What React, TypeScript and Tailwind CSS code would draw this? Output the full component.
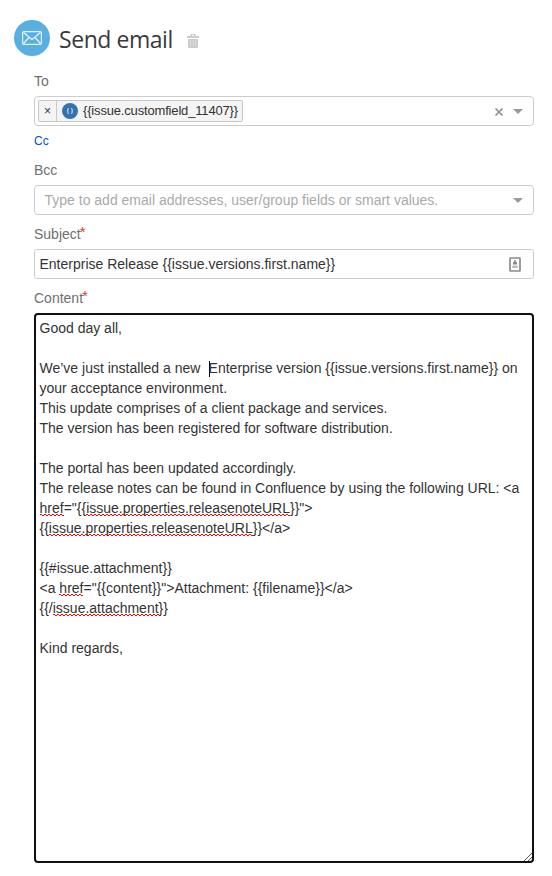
import React from 'react';

const Typo: React.FC<{ children: React.ReactNode }> = ({ children }) => (
  <span className="bg-[conic-gradient(from_90deg_at_2px_1px,#f00_25%,transparent_0_50%,#f00_0_75%,transparent_0)] bg-[length:4px_2px] bg-bottom-left bg-repeat-x">
    {children}
  </span>
);

const Label: React.FC<{ text: string; required?: boolean }> = ({ text, required }) => (
  <div className="flex h-5 text-[#707070]">
    <span>{text}</span>
    {required && <span className="-mt-[2px] -ml-px text-[15px] leading-5 text-[#d04437]">*</span>}
  </div>
);

const Caret: React.FC = () => (
  <span className="h-0 w-0 border-x-[5px] border-t-[5px] border-x-transparent border-t-[#999]" />
);

const Header: React.FC = () => (
  <header className="flex h-9 items-center pl-[14px]">
    <svg className="h-9 w-9" viewBox="0 0 36 36" fill="none">
      <circle cx="18" cy="18" r="18" fill="#59afe1" />
      <g stroke="#e6f3fb" strokeWidth="1.2" strokeLinejoin="round">
        <rect x="8.6" y="11.6" width="18.8" height="12.8" rx="1.2" />
        <path d="M9.5 12.5L18 19.5L26.5 12.5M9.5 23.5L15 17.5M26.5 23.5L21 17.5" />
      </g>
    </svg>
    <h1 className="mt-px ml-[9px] w-[114px] font-['Open_Sans',sans-serif] text-[23px] leading-9 tracking-[-0.45px] whitespace-nowrap text-[#3a3a3a]">Send email</h1>
    <svg className="mt-[5px] ml-[14px] h-[14px] w-3" viewBox="0 0 12 14">
      <path fill="#ccc" d="M3.5 0h5v2H12v2H0V2h3.5zM5 1v1h2V1zM1 5h10V12.5q0 1.5-1.5 1.5h-7Q1 14 1 12.5z" />
      <path stroke="#ddd" strokeWidth="1" d="M3.5 6v6M6 6v6M8.5 6v6" />
    </svg>
  </header>
);

const Recipient: React.FC = () => (
  <div className="flex h-[22px] items-center rounded-[2px] border border-[#c8c8c8] bg-[#f4f4f4] text-[#333]">
    <span className="flex h-full w-[18px] items-center justify-center border-r border-[#c8c8c8] text-xs">×</span>
    <svg className="ml-[5px] h-4 w-4" viewBox="0 0 16 16" fill="none">
      <circle cx="8" cy="8" r="8" fill="#3572b0" />
      <path stroke="#c3d5e7" strokeWidth="1.2" d="M7 5.5q-1.2 0-1.2 1.2v2.6q0 1.2 1.2 1.2M9 5.5q1.2 0 1.2 1.2v2.6q0 1.2-1.2 1.2" />
    </svg>
    <span className="pr-1 pl-[5px] text-[13px] tracking-[-0.17px]">{'{{issue.customfield_11407}}'}</span>
  </div>
);

const Message: React.FC = () => (
  <div className="relative h-[550px] rounded-[4px] border-2 border-[#101014] py-[3px] pl-[3.5px] whitespace-pre text-[#333]">
    <p>Good day all,</p>
    <br />
    <p>
      {'We’ve just installed a new  '}
      <span className="-mr-[1.5px] ml-px inline-block h-4 w-px bg-black align-middle" />
      {'Enterprise version {{issue.versions.first.name}} on'}
    </p>
    <p>your acceptance environment.</p>
    <p>This update comprises of a client package and services.</p>
    <p>The version has been registered for software distribution.</p>
    <br />
    <p>The portal has been updated accordingly.</p>
    <p>{'The release notes can be found in Confluence by using the following URL: <a'}</p>
    <p>
      <Typo>href</Typo>
      {'="{{'}
      <Typo>issue.properties.releasenoteURL</Typo>
      {'}}">'}
    </p>
    <p>
      {'{{'}
      <Typo>issue.properties.releasenoteURL</Typo>
      {'}}</a>'}
    </p>
    <br />
    <p>{'{{#issue.attachment}}'}</p>
    <p>
      {'<a '}
      <Typo>href</Typo>
      {'="{{content}}">Attachment: {{filename}}</a>'}
    </p>
    <p>
      {'{{/'}
      <Typo>issue.attachment</Typo>
      {'}}'}
    </p>
    <br />
    <p>Kind regards,</p>
    <svg className="absolute right-0 bottom-0 h-[9px] w-[9px]" viewBox="0 0 9 9" shapeRendering="crispEdges">
      <path stroke="#555" d="M1 9L9 1M5 9L9 5" />
    </svg>
  </div>
);

const App: React.FC = () => {
  return (
    <main className="h-[876px] w-[552px] bg-white pt-5 font-['Liberation_Sans',Arial,sans-serif] text-sm leading-5">
      <Header />

      <div className="ml-[34px] w-[500px] pt-[15px]">
        <Label text="To" />
        <div className="mt-[5px] flex h-[30px] items-center rounded-[4px] border border-[#ccc] pr-[10px] pl-[3px]">
          <Recipient />
          <svg className="mt-[2px] mr-[10px] ml-auto h-2 w-2" viewBox="0 0 8 8">
            <path stroke="#999" strokeWidth="1.8" d="M.5 .5l7 7M7.5 .5l-7 7" />
          </svg>
          <Caret />
        </div>
        <a href="#" className="mt-[5px] block h-5 w-fit text-xs leading-5 text-[#0052cc]">Cc</a>

        <div className="mt-[9px]">
          <Label text="Bcc" />
          <div className="mt-[5px] flex h-[30px] items-center justify-between rounded-[4px] border border-[#ccc] pr-[10px] pl-[9.5px] text-[#aaa]">
            Type to add email addresses, user/group fields or smart values.
            <Caret />
          </div>
        </div>

        <div className="mt-[9px]">
          <Label text="Subject" required />
          <div className="mt-[5px] flex h-[30px] items-center justify-between rounded-[3px] border border-[#ccc] pr-3 pl-[4.5px] text-[#333]">
            {'Enterprise Release {{issue.versions.first.name}}'}
            <svg className="h-[15px] w-3" viewBox="0 0 12 15" fill="none">
              <rect x="1" y="1" width="10" height="13" rx=".5" stroke="#8b8b8b" strokeWidth="1.7" />
              <path fill="#8b8b8b" d="M5.2 3h1.6v2H8v2.4H4V5h1.2z" />
              <path fill="#bbb" d="M3.3 8.5h5.4V11H3.3z" />
            </svg>
          </div>
        </div>

        <div className="mt-[9px]">
          <Label text="Content" required />
          <div className="mt-[5px]">
            <Message />
          </div>
        </div>
      </div>
    </main>
  );
};

export default App;
